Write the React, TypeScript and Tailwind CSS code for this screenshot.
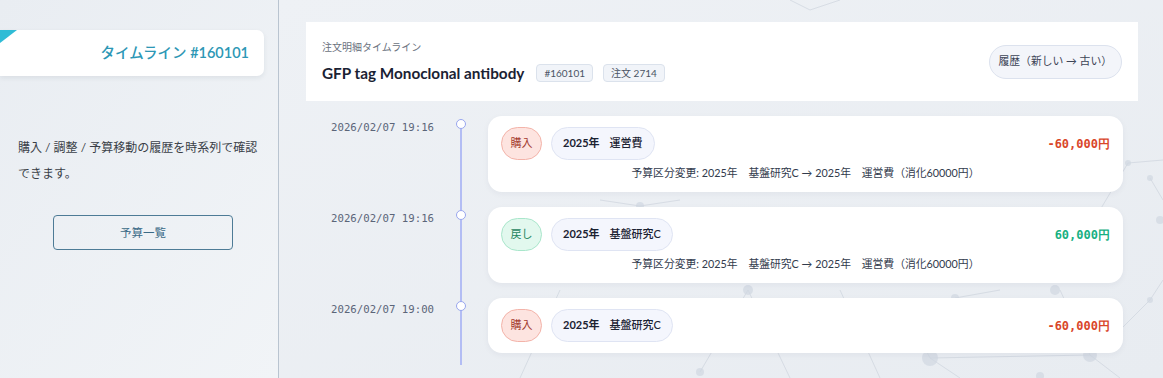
import React from "react";

type Entry = {
  time: string;
  kind: "buy" | "back";
  year: string;
  category: string;
  amount: string;
  note?: string;
};

const entries: Entry[] = [
  {
    time: "2026/02/07 19:16",
    kind: "buy",
    year: "2025年",
    category: "運営費",
    amount: "-60,000円",
    note: "予算区分変更: 2025年　基盤研究C → 2025年　運営費（消化60000円）",
  },
  {
    time: "2026/02/07 19:16",
    kind: "back",
    year: "2025年",
    category: "基盤研究C",
    amount: "60,000円",
    note: "予算区分変更: 2025年　基盤研究C → 2025年　運営費（消化60000円）",
  },
  {
    time: "2026/02/07 19:00",
    kind: "buy",
    year: "2025年",
    category: "基盤研究C",
    amount: "-60,000円",
  },
];

const sans =
  "font-['Lato','Noto_Sans_CJK_JP','Noto_Sans',sans-serif]";
const mono = "font-['DejaVu_Sans_Mono','Liberation_Mono',monospace]";

// faint molecule-like network behind the main column
function Network() {
  const nodes: [number, number, number][] = [
    [1128, 163, 3],
    [1150, 178, 3],
    [1160, 220, 4],
    [1150, 300, 3],
    [955, 298, 4],
    [748, 290, 5],
    [930, 358, 8],
    [1090, 355, 7],
    [700, 372, 4],
    [1040, 376, 4],
    [640, 206, 4],
    [1055, 290, 5],
  ];
  const lines: [number, number, number, number][] = [
    [790, 0, 810, 10],
    [810, 10, 840, 0],
    [1128, 163, 1163, 160],
    [1128, 163, 1100, 210],
    [1150, 178, 1163, 200],
    [1150, 300, 1120, 330],
    [1150, 300, 1163, 280],
    [930, 358, 1090, 355],
    [930, 358, 900, 300],
    [930, 358, 960, 378],
    [1090, 355, 1060, 290],
    [1090, 355, 1120, 378],
    [748, 290, 700, 372],
    [748, 290, 790, 378],
    [955, 298, 1000, 290],
    [640, 206, 600, 200],
    [640, 206, 680, 200],
    [560, 290, 520, 378],
    [840, 290, 880, 378],
  ];
  return (
    <svg
      className="pointer-events-none absolute inset-0 h-full w-full"
      viewBox="0 0 884 378"
      preserveAspectRatio="none"
    >
      <g transform="translate(-279 0)">
        {lines.map(([x1, y1, x2, y2], i) => (
          <line
            key={i}
            x1={x1}
            y1={y1}
            x2={x2}
            y2={y2}
            stroke="#cad1db"
            strokeWidth="1"
            opacity="0.6"
          />
        ))}
        {nodes.map(([cx, cy, r], i) => (
          <circle key={i} cx={cx} cy={cy} r={r} fill="#d0d7e1" opacity="0.7" />
        ))}
      </g>
    </svg>
  );
}

function KindBadge({ kind }: { kind: Entry["kind"] }) {
  if (kind === "back") {
    return (
      <span className="flex h-[33px] w-[41px] items-center justify-center rounded-full border border-[#a9e6cb] bg-[#e2f8ee] text-[11px] text-[#1f8660]">
        戻し
      </span>
    );
  }
  return (
    <span className="flex h-[33px] w-[41px] items-center justify-center rounded-full border border-[#f3b3a9] bg-[#fde4e0] text-[11px] text-[#a33a2e]">
      購入
    </span>
  );
}

function TimelineRow({ e }: { e: Entry }) {
  const positive = !e.amount.startsWith("-");
  return (
    <div className="flex">
      <div
        className={`w-[128px] pt-[4px] text-right text-[10.7px] leading-4 text-[#5b6579] ${mono}`}
      >
        {e.time}
      </div>
      <div className="flex w-[54px] justify-center pt-[3px]">
        <span className="relative z-10 h-[10px] w-[10px] rounded-full border-[1.5px] border-[#98a6ef] bg-white" />
      </div>
      <div className="w-[635px] rounded-[14px] bg-white px-[13px] py-[11px] shadow-[0_2px_6px_rgba(30,45,70,0.05)]">
        <div className="flex items-center justify-between">
          <div className="flex items-center gap-[9px]">
            <KindBadge kind={e.kind} />
            <span className="flex h-[33px] items-center rounded-full border border-[#dfe4f3] bg-[#f4f6fd] px-[11px] text-[11px] text-[#1b2232]">
              <span className="font-bold">{e.year}</span>
              <span className="ml-[10px] font-medium">{e.category}</span>
            </span>
          </div>
          <span
            className={`text-[12px] font-bold ${mono} ${positive ? "text-[#17b082]" : "text-[#d9462a]"}`}
          >
            {e.amount}
          </span>
        </div>
        {e.note && (
          <div className="mt-[5px] text-center text-[10.8px] leading-4 text-[#323b4d]">
            {e.note}
          </div>
        )}
      </div>
    </div>
  );
}

export default function App() {
  return (
    <div className={`flex h-[378px] w-full overflow-hidden ${sans}`}>
      <aside className="w-[279px] shrink-0 border-r border-[#b9c4d0] bg-gradient-to-br from-[#e9edf2] to-[#f1f4f7]">
        <div className="relative mt-[30px] flex h-[46px] w-[264px] items-center justify-end overflow-hidden rounded-r-[7px] bg-white pr-[15px] shadow-[0_2px_5px_rgba(30,45,70,0.08)]">
          <span className="absolute left-0 top-0 h-0 w-0 border-r-[17px] border-t-[13px] border-r-transparent border-t-[#2fbcd6]" />
          <span className="text-[14.5px] font-medium text-[#2d97b5]">
            タイムライン <span className="font-semibold">#160101</span>
          </span>
        </div>
        <p className="mt-[59px] w-[260px] pl-[18px] text-[12px] leading-[26px] text-[#3a3f48]">
          購入 / 調整 / 予算移動の履歴を時系列で確認できます。
        </p>
        <button className="ml-[53px] mt-[28px] flex h-[35px] w-[180px] items-center justify-center rounded-[4px] border border-[#4d7b96] text-[11.5px] text-[#3a6a86]">
          予算一覧
        </button>
      </aside>

      <main className="relative flex-1 bg-gradient-to-br from-[#eef1f5] to-[#e8ecf1] pl-[27px] pr-[25px] pt-[22px]">
        <Network />
        <div className="relative">
          <div className="flex h-[79px] items-center justify-between bg-white px-[16px]">
            <div className="flex flex-col gap-[9px]">
              <span className="text-[10px] leading-[14px] text-[#6b7280]">
                注文明細タイムライン
              </span>
              <div className="flex items-center gap-[10px]">
                <span className="mr-[2px] text-[15.3px] font-bold leading-5 text-[#1a2233]">
                  GFP tag Monoclonal antibody
                </span>
                <span className="rounded-[4px] border border-[#dbe2ec] bg-[#f1f4f9] px-[7px] text-[10px] leading-[16px] text-[#4b5565]">
                  #160101
                </span>
                <span className="rounded-[4px] border border-[#dbe2ec] bg-[#f1f4f9] px-[7px] text-[10px] leading-[16px] text-[#4b5565]">
                  注文 2714
                </span>
              </div>
            </div>
            <span className="flex h-[34px] items-center rounded-full border border-[#dce2ee] bg-[#f3f5fa] px-[9px] text-[10.8px] text-[#3c4456]">
              履歴（新しい → 古い）
            </span>
          </div>

          <div className="relative mt-[15px] flex flex-col gap-[15px] pb-[12px]">
            <span className="absolute bottom-0 left-[154px] top-[8px] w-[2px] bg-[#b3bdf4]" />
            {entries.map((e, i) => (
              <TimelineRow key={i} e={e} />
            ))}
          </div>
        </div>
      </main>
    </div>
  );
}
